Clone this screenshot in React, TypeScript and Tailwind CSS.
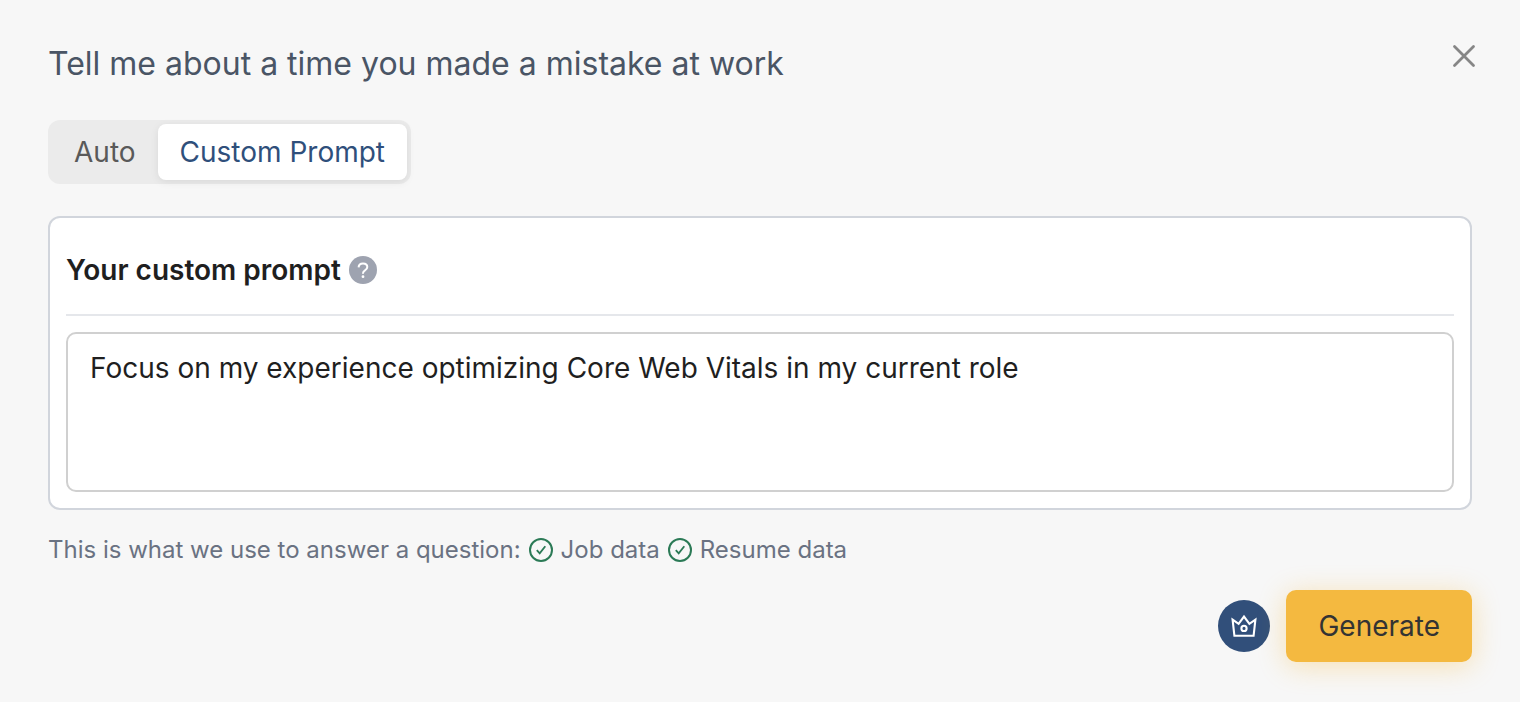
import React, { useState } from "react";

const tabs = ["Auto", "Custom Prompt"];
const sources = ["Job data", "Resume data"];

const CloseIcon = () => (
  <svg width="24" height="24" viewBox="0 0 24 24" fill="none" stroke="#868686" strokeWidth="2.8" strokeLinecap="round">
    <path d="M2.5 2.5l19 19M21.5 2.5l-19 19" />
  </svg>
);

const HelpIcon = () => (
  <svg width="28" height="28" viewBox="0 0 28 28" fill="none">
    <circle cx="14" cy="14" r="14" fill="#9ea3b0" />
    <path
      d="M9.6 11.4c.1-2.4 1.8-3.9 4.4-3.9 2.5 0 4.3 1.4 4.3 3.5 0 1.6-.8 2.5-2.3 3.4-1.5.9-2 1.5-2 2.8v.6"
      stroke="#fff"
      strokeWidth="2"
    />
    <circle cx="14" cy="20.7" r="1.4" fill="#fff" />
  </svg>
);

const CheckIcon = () => (
  <svg width="24" height="24" viewBox="0 0 24 24" fill="none" stroke="#2b7a56">
    <circle cx="12" cy="12" r="11" strokeWidth="2" />
    <path d="M7.8 12.2l2.9 3.2 5.6-7.2" strokeWidth="1.8" />
  </svg>
);

const CrownIcon = () => (
  <svg width="28" height="28" viewBox="0 0 28 28" fill="none" stroke="#fff" strokeWidth="2.1">
    <path d="M2.6 7.6l6 4.2L14 4.6l5.4 7.2 6-4.2-1.8 16.2H4.4z" />
    <circle cx="14" cy="16.4" r="2.6" />
  </svg>
);

const App: React.FC = () => {
  const [activeTab, setActiveTab] = useState("Custom Prompt");
  const [prompt, setPrompt] = useState(
    "Focus on my experience optimizing Core Web Vitals in my current role"
  );

  return (
    <div className="min-h-screen bg-[#f7f7f7] px-12 py-10 font-['Inter',sans-serif]">
      <div className="flex items-start justify-between">
        <h1 className="text-[32px] leading-12 text-gray-600">
          Tell me about a time you made a mistake at work
        </h1>
        <button type="button" aria-label="Close" className="-mr-2 p-1">
          <CloseIcon />
        </button>
      </div>

      <div className="mt-8 inline-flex rounded-xl bg-[#ebebeb] p-1">
        {tabs.map((tab) => (
          <button
            key={tab}
            type="button"
            onClick={() => setActiveTab(tab)}
            className={`h-14 rounded-lg px-[22px] text-[28px] ${
              activeTab === tab
                ? "bg-white text-[#2f4f7b] shadow-[0_2px_8px_rgba(0,0,0,0.08)]"
                : "text-[#595959]"
            }`}
          >
            {tab}
          </button>
        ))}
      </div>

      <div className="mt-8 rounded-xl border-2 border-gray-300 bg-white p-4">
        <div className="flex items-center gap-2 border-b-2 border-gray-200 pt-4 pb-6">
          <label htmlFor="prompt" className="text-[28px] leading-10 font-semibold text-[#1f1f1f]">
            Your custom prompt
          </label>
          <HelpIcon />
        </div>
        <textarea
          id="prompt"
          value={prompt}
          onChange={(e) => setPrompt(e.target.value)}
          className="mt-4 block h-40 w-full resize-none rounded-[10px] border-2 border-[#d0d0d0] bg-white px-[22px] py-3 text-[28px] leading-11 text-[#1f1f1f] outline-none"
        />
      </div>

      <div className="mt-5 flex items-center gap-2 text-2xl leading-10 text-gray-500">
        <span>This is what we use to answer a question:</span>
        {sources.map((source) => (
          <span key={source} className="flex items-center gap-2">
            <CheckIcon />
            {source}
          </span>
        ))}
      </div>

      <div className="mt-5 flex items-center justify-end gap-4">
        <span className="flex size-13 items-center justify-center rounded-full bg-[#314f7a]">
          <CrownIcon />
        </span>
        <button
          type="button"
          className="h-18 rounded-[10px] bg-[#f4b940] px-8 text-[28px] text-[#333] shadow-[0_4px_28px_rgba(250,173,20,0.3)]"
        >
          Generate
        </button>
      </div>
    </div>
  );
};

export default App;
